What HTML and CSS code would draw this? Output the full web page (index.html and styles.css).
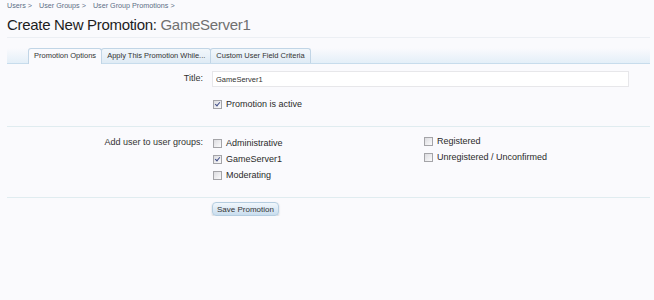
FILE: index.html
```html
<!DOCTYPE html>
<html lang="en">
<head>
    <meta charset="UTF-8">
    <title>Create New Promotion</title>
    <link rel="stylesheet" href="styles.css">
</head>
<body>
    <div class="breadcrumb">
        <a href="#">Users &gt;</a>
        <a href="#">User Groups &gt;</a>
        <a href="#">User Group Promotions &gt;</a>
    </div>
    <h1>Create New Promotion: <em>GameServer1</em></h1>

    <div class="tabs">
        <span class="tab active">Promotion Options</span>
        <span class="tab">Apply This Promotion While...</span>
        <span class="tab">Custom User Field Criteria</span>
    </div>

    <div class="section">
        <div class="row">
            <label class="label" for="title">Title:</label>
            <div class="control">
                <input type="text" id="title" value="GameServer1">
            </div>
        </div>
        <div class="row">
            <div class="label"></div>
            <div class="control">
                <label class="check"><input type="checkbox" checked> Promotion is active</label>
            </div>
        </div>
    </div>

    <div class="section groups-section">
        <div class="row">
            <div class="label">Add user to user groups:</div>
            <div class="control groups">
                <ul class="col">
                    <li><label class="check"><input type="checkbox"> Administrative</label></li>
                    <li><label class="check"><input type="checkbox" checked> GameServer1</label></li>
                    <li><label class="check"><input type="checkbox"> Moderating</label></li>
                </ul>
                <ul class="col second">
                    <li><label class="check"><input type="checkbox"> Registered</label></li>
                    <li><label class="check"><input type="checkbox"> Unregistered / Unconfirmed</label></li>
                </ul>
            </div>
        </div>
    </div>

    <div class="submit">
        <div class="label"></div>
        <button>Save Promotion</button>
    </div>
</body>
</html>
```
FILE: styles.css
```css
body { margin: 0; padding: 0 4px 0 7px; background-color: #fafafd; color: #2a2a2a; font-family: "Liberation Sans", Arial, sans-serif; font-size: 9px; }
.breadcrumb { display: flex; height: 12px; font-size: 7.2px; line-height: 12px; }
.breadcrumb a { color: #5d6f86; text-decoration: none; margin-right: 7px; }
h1 { margin: 0; padding: 2px 0 1px; font-size: 15px; letter-spacing: -0.3px; font-weight: normal; line-height: 22px; color: #1d1d1d; border-bottom: 1px solid #eceff4; }
h1 em { font-style: normal; color: #707070; }

.tabs { display: flex; margin-top: 10px; padding-left: 21px; height: 15px; border-bottom: 1px solid #c7dcec; background: linear-gradient(#fafafd, #e4eff8); }
.tab { display: block; padding: 0 5px; line-height: 14px; font-size: 7.5px; color: #333; border: 1px solid #c1d5e6; border-bottom: none; border-radius: 3px 3px 0 0; background: linear-gradient(#f2f7fb, #dfebf5); }
.tab + .tab { margin-left: -1px; }
.tab.active { background: #fafafd; height: 15px; }

.section { padding: 7px 0 14px; border-bottom: 1px solid #e0ecf0; }
.groups-section { padding-bottom: 14px; padding-top: 8px; }
.row { display: flex; }
.label { width: 196px; flex: none; text-align: right; padding-right: 9px; line-height: 15px; color: #333; }
.control { flex: 1; padding-right: 21px; }
input[type=text] { box-sizing: border-box; width: 100%; height: 16px; margin: 0 0 9px; padding: 0 3px; border: 1px solid #e7e7ea; background: #fff; font-family: inherit; font-size: 7.5px; color: #333; }
.check { display: flex; align-items: center; height: 16px; font-size: 9px; }
.check input { appearance: none; -webkit-appearance: none; position: relative; box-sizing: border-box; width: 9px; height: 9px; margin: 0 4px 0 1px; border: 1px solid #a4a4a8; background: linear-gradient(135deg, #dcdce0, #fbfbfc); }
.check input:checked::after { content: ""; position: absolute; left: 2px; top: 0; width: 2px; height: 4px; border: solid #43508a; border-width: 0 1.5px 1.5px 0; transform: rotate(40deg); }
.groups { display: flex; }
.col { list-style: none; margin: 0; padding: 0; width: 211px; }
.col.second { margin-top: -2px; }

.submit { display: flex; padding-top: 4px; }
button { padding: 0 4px; height: 14px; font-family: inherit; font-size: 8px; color: #333; border: 1px solid #b5cde0; border-radius: 4px; background: linear-gradient(#f1f7fc, #c9ddee); box-shadow: 0 1px 2px rgba(0,0,0,0.2); }
```
